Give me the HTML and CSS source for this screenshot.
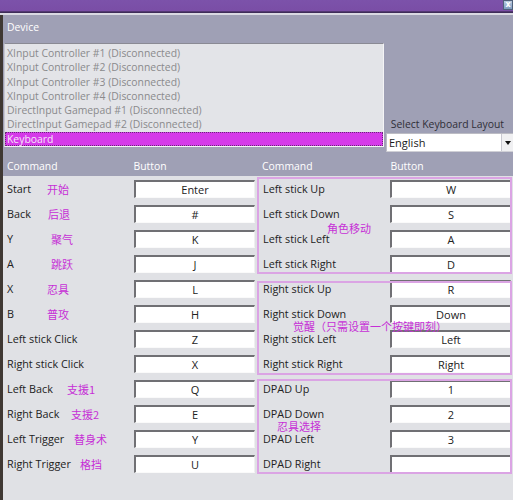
FILE: index.html
```html
<!DOCTYPE html>
<html lang="en">
<head>
<meta charset="utf-8">
<title>Controller Config</title>
<link rel="stylesheet" href="styles.css">
</head>
<body>
<div class="titlebar"><span class="close">x</span></div>
<div class="frame">
  <div class="top">
    <div class="device-label">Device</div>
    <div class="device-row">
      <ul class="listbox">
        <li>XInput Controller #1 (Disconnected)</li>
        <li>XInput Controller #2 (Disconnected)</li>
        <li>XInput Controller #3 (Disconnected)</li>
        <li>XInput Controller #4 (Disconnected)</li>
        <li>DirectInput Gamepad #1 (Disconnected)</li>
        <li>DirectInput Gamepad #2 (Disconnected)</li>
        <li class="selected">Keyboard</li>
      </ul>
      <div class="layout">
        <div class="layout-label">Select Keyboard Layout</div>
        <div class="select"><span class="select-value">English</span><span class="select-arrow"></span></div>
      </div>
    </div>
    <div class="header">
      <span class="h-cmd">Command</span><span class="h-btn">Button</span>
      <span class="h-cmd h-cmd-right">Command</span><span class="h-btn">Button</span>
    </div>
  </div>
  <div class="body">
    <div class="left-col">
      <div class="row"><div class="cmd">Start<span class="note" style="left:44px">开始</span></div><div class="key">Enter</div></div>
      <div class="row"><div class="cmd">Back<span class="note" style="left:45px">后退</span></div><div class="key">#</div></div>
      <div class="row"><div class="cmd">Y<span class="note" style="left:48px">聚气</span></div><div class="key">K</div></div>
      <div class="row"><div class="cmd">A<span class="note" style="left:48px">跳跃</span></div><div class="key">J</div></div>
      <div class="row"><div class="cmd">X<span class="note" style="left:44px">忍具</span></div><div class="key">L</div></div>
      <div class="row"><div class="cmd">B<span class="note" style="left:44px">普攻</span></div><div class="key">H</div></div>
      <div class="row"><div class="cmd">Left stick Click</div><div class="key">Z</div></div>
      <div class="row"><div class="cmd">Right stick Click</div><div class="key">X</div></div>
      <div class="row"><div class="cmd">Left Back<span class="note" style="left:64px">支援1</span></div><div class="key">Q</div></div>
      <div class="row"><div class="cmd">Right Back<span class="note" style="left:68px">支援2</span></div><div class="key">E</div></div>
      <div class="row"><div class="cmd">Left Trigger<span class="note" style="left:71px">替身术</span></div><div class="key">Y</div></div>
      <div class="row"><div class="cmd">Right Trigger<span class="note" style="left:77px">格挡</span></div><div class="key">U</div></div>
    </div>
    <div class="right-col">
      <div class="group group-1">
        <div class="row"><div class="cmd">Left stick Up</div><div class="key">W</div></div>
        <div class="row"><div class="cmd">Left stick Down</div><div class="key">S</div></div>
        <div class="row"><div class="cmd">Left stick Left</div><div class="key">A</div></div>
        <div class="row"><div class="cmd">Left stick Right</div><div class="key">D</div></div>
        <span class="note" style="left:71px;top:46px">角色移动</span>
      </div>
      <div class="group group-2">
        <div class="row"><div class="cmd">Right stick Up</div><div class="key">R</div></div>
        <div class="row"><div class="cmd">Right stick Down</div><div class="key">Down</div></div>
        <div class="row"><div class="cmd">Right stick Left</div><div class="key">Left</div></div>
        <div class="row"><div class="cmd">Right stick Right</div><div class="key">Right</div></div>
        <span class="note" style="left:37px;top:44px">觉醒（只需设置一个按键即刻）</span>
      </div>
      <div class="group group-3">
        <div class="row"><div class="cmd">DPAD Up</div><div class="key">1</div></div>
        <div class="row"><div class="cmd">DPAD Down</div><div class="key">2</div></div>
        <div class="row"><div class="cmd">DPAD Left</div><div class="key">3</div></div>
        <div class="row"><div class="cmd">DPAD Right</div><div class="key"></div></div>
        <span class="note" style="left:21px;top:44px">忍具选择</span>
      </div>
    </div>
  </div>
</div>
</body>
</html>
```

FILE: styles.css
```css
* { box-sizing: border-box; }
html, body { margin: 0; padding: 0; }
body {
  width: 513px;
  height: 500px;
  overflow: hidden;
  background: #3b3631;
  font-family: "Open Sans", "Liberation Sans", "Noto Sans CJK SC", sans-serif;
  font-size: 10.4px;
  color: #222;
}
.titlebar {
  height: 15px;
  background: linear-gradient(#7c52aa, #7a4ea6 70%, #3e2c58 80%, #3e2c58 87%, #d9d9e2 88%);
  position: relative;
}
.close {
  position: absolute;
  right: 0;
  top: 0;
  width: 10px;
  height: 10px;
  background: linear-gradient(#b9cbe0, #7f9cc0);
  border: 1px solid #50607a;
  color: #fff;
  font: bold 8px/8px "DejaVu Sans", sans-serif;
  text-align: center;
}
.frame {
  border-left: 3px solid #3f3833;
  background: #e0e1e5;
  height: 485px;
}
.top {
  background: #9fa0b5;
  padding-top: 4px;
}
.device-label {
  color: #fff;
  height: 24px;
  line-height: 16px;
  padding-left: 4px;
}
.device-row {
  display: flex;
  align-items: flex-end;
}
.listbox {
  list-style: none;
  margin: 0 0 0 1px;
  padding: 2px 0 0 0;
  width: 380px;
  height: 104px;
  background: #e3e4e8;
  border-top: 1px solid #8a8a94;
  border-left: 1px solid #c8c8d0;
  border-right: 1px solid #f4f4f6;
  border-bottom: 1px solid #f4f4f6;
}
.listbox li {
  height: 14.3px;
  line-height: 14px;
  padding-left: 2px;
  color: #8a8a8c;
  white-space: nowrap;
}
.listbox li.selected {
  background: #d53ae9;
  color: #f6e6f8;
  border: 1px dotted #6a2a78;
  line-height: 12px;
  padding-left: 1px;
}
.layout {
  margin-left: 2px;
  flex: 1;
  margin-bottom: -5px;
}
.layout-label {
  color: #2f2f38;
  text-align: right;
  padding-right: 9px;
  line-height: 14px;
  margin-bottom: 2px;
  white-space: nowrap;
}
.select {
  height: 19px;
  background: #fff;
  border-top: 1px solid #bcbcc4;
  border-left: 1px solid #bcbcc4;
  border-bottom: 1px solid #d0d0d6;
  display: flex;
  align-items: center;
  padding-left: 2px;
}
.select-value { flex: 1; color: #1a1a1a; font-size: 11px; }
.select-arrow {
  width: 12px;
  height: 17px;
  background: #f0f0f2;
  border-left: 1px solid #c8c8d0;
  position: relative;
}
.select-arrow::after {
  content: "";
  position: absolute;
  left: 3px;
  top: 7px;
  border-left: 3px solid transparent;
  border-right: 3px solid transparent;
  border-top: 4px solid #111;
}
.header {
  display: flex;
  height: 20px;
  line-height: 20px;
  color: #fff;
  margin-top: 9px;
}
.h-cmd { width: 131px; padding-left: 4px; }
.h-btn { width: 125px; padding-left: 1px; }
.h-cmd-right { width: 135px; padding-left: 6px; }
.body {
  display: flex;
}
.left-col { width: 253px; }
.right-col { width: 257px; }
.row {
  display: flex;
  align-items: center;
  height: 25px;
}
.left-col .cmd { width: 131px; padding-left: 4px; }
.right-col .cmd { width: 134px; padding-left: 7px; }
.cmd {
  position: relative;
  line-height: 14px;
  white-space: nowrap;
  font-size: 10.8px;
}
.key {
  width: 121px;
  height: 18px;
  background: #fff;
  border-top: 2px solid #707074;
  border-left: 2px solid #707074;
  border-right: 1px solid #f0f0f0;
  border-bottom: 1px solid #fafafa;
  text-align: center;
  line-height: 15px;
  color: #222;
  font-size: 11px;
}
.group {
  position: relative;
}
.group::before {
  content: "";
  position: absolute;
  left: 1px;
  right: 1px;
  border: 2px solid #dba4e4;
  pointer-events: none;
}
.group-1::before { top: 1px; bottom: 2px; }
.group-2::before { top: 5px; bottom: 1px; }
.group-3::before { top: 3px; bottom: 2px; }
.note {
  position: absolute;
  top: 1px;
  color: #c62fd6;
  font-family: "Noto Sans CJK SC", sans-serif;
  font-size: 11px;
  line-height: 12px;
  white-space: nowrap;
}
```
